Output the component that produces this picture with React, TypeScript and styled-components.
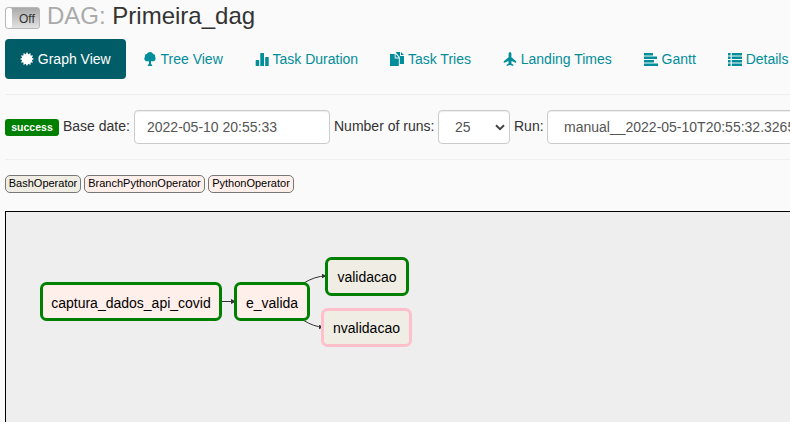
import React from "react";
import styled, { createGlobalStyle, css } from "styled-components";

const GlobalStyle = createGlobalStyle`
  * { box-sizing: border-box; }
  html, body { margin: 0; height: 100%; overflow: hidden; background: #fafafa; }
  body { font-family: "Liberation Sans", Arial, sans-serif; font-size: 14px; line-height: 20px; color: #333; }
`;

const Page = styled.div`
  height: 422px;
  padding-left: 5px;
  overflow: hidden;
  display: flex;
  flex-direction: column;
`;

const Header = styled.header`
  display: flex;
  height: 39px;
  padding-top: 3px;
`;

const Toggle = styled.div`
  width: 35px;
  height: 22px;
  margin: 4px 7px 0 0;
  display: flex;
  border: 1px solid #b8b8b8;
  border-radius: 3px;
  overflow: hidden;
  background: linear-gradient(#aaa, #e2e2e2);
`;

const ToggleKnob = styled.span`
  width: 6px;
  flex: none;
  border-radius: 2px;
  background: #fff;
`;

const ToggleLabel = styled.span`
  flex: 1;
  padding-left: 7px;
  font-size: 12px;
  line-height: 22px;
  color: #333;
`;

const Title = styled.h3`
  margin: 0;
  font-size: 24px;
  line-height: 26px;
  font-weight: 400;
  white-space: pre;
`;

const Muted = styled.span`
  color: #aaa;
`;

const Tabs = styled.nav`
  display: flex;
  gap: 2px;
  height: 40px;
  flex: none;
`;

const Tab = styled.a<{ $active?: boolean }>`
  display: flex;
  flex: none;
  align-items: center;
  gap: 3.8px;
  padding: 0 15px;
  border-radius: 4px;
  white-space: nowrap;
  color: #018d99;
  ${(p) => p.$active && css`background: #005c66; color: #fff;`}
`;

const Glyph = styled.svg`
  width: 14px;
  height: 14px;
  flex: none;
  margin-top: -1px;
  fill: currentColor;
`;

const Divider = styled.hr`
  width: 100%;
  flex: none;
  height: 1px;
  border: 0;
  margin: 15px 0;
  background: #eee;
`;

const Filters = styled.form`
  display: flex;
  flex: none;
  height: 34px;
  width: 900px;
`;

const Status = styled.span`
  width: 54px;
  height: 17px;
  margin: 9px 4px 0 0;
  border-radius: 3px;
  background: green;
  color: #fff;
  font-size: 10.5px;
  font-weight: 700;
  line-height: 17px;
  text-align: center;
`;

const Label = styled.label<{ $width: number }>`
  width: ${(p) => p.$width}px;
  flex: none;
  line-height: 32px;
  white-space: nowrap;
`;

const Field = styled.div<{ $width: number; $indent: number }>`
  width: ${(p) => p.$width}px;
  height: 34px;
  flex: none;
  display: flex;
  align-items: center;
  justify-content: space-between;
  margin-right: 4px;
  padding: 0 4px 0 ${(p) => p.$indent}px;
  border: 1px solid #ccc;
  border-radius: 4px;
  background: #fff;
  box-shadow: inset 0 1px 1px rgba(0, 0, 0, 0.075);
  color: #555;
  white-space: nowrap;
`;

const Chevron = styled.svg`
  width: 10px;
  height: 7px;
  fill: none;
  stroke: #444;
  stroke-width: 2;
`;

const Legend = styled.div`
  display: flex;
  gap: 3px;
  flex: none;
  height: 18px;
  margin-bottom: 18px;
`;

const Operator = styled.span<{ $fill: string; $width: number }>`
  width: ${(p) => p.$width}px;
  border: 1px solid #777;
  border-radius: 5px;
  background: ${(p) => p.$fill};
  color: #000;
  font-size: 11px;
  line-height: 15px;
  text-align: center;
  white-space: nowrap;
`;

const Canvas = styled.main`
  position: relative;
  flex: 1;
  border: 1px solid #000;
  border-right: 0;
  border-bottom: 0;
  background: #eee;
`;

const Edges = styled.svg`
  position: absolute;
  inset: 0;
  width: 784px;
  height: 210px;
  fill: none;
  stroke: #333;
`;

const Node = styled.div<{ $x: number; $y: number; $w: number; $fill: string; $state: string; $drop?: number }>`
  position: absolute;
  left: ${(p) => p.$x}px;
  top: ${(p) => p.$y}px;
  width: ${(p) => p.$w}px;
  height: 39px;
  border: 3px solid ${(p) => p.$state};
  border-radius: 6.5px;
  background: ${(p) => p.$fill};
  color: #000;
  line-height: ${(p) => 35 + 2 * (p.$drop ?? 0)}px;
  text-align: center;
  white-space: nowrap;
`;

const burst = Array.from({ length: 24 }, (_, i) => {
  const a = (i * Math.PI) / 12;
  const r = i % 2 ? 5 : 7;
  return `${(7 + r * Math.sin(a)).toFixed(2)},${(7 - r * Math.cos(a)).toFixed(2)}`;
}).join(" ");

const tabs = [
  { label: "Graph View", icon: <polygon points={burst} /> },
  { label: "Tree View", icon: <path d="M7 0C8.6 0 9.7 .9 10 2.1 11.8 2.3 12.4 3.7 12.1 4.9 13.4 6.6 12.3 9.2 10 9.2H8V11.5L9.5 14H4.5L6 11.5V9.2H4C1.7 9.2 .6 6.6 1.9 4.9 1.6 3.7 2.2 2.3 4 2.1 4.3 .9 5.4 0 7 0Z" /> },
  { label: "Task Duration", icon: <path d="M.7 8.5Q.7 8 1.2 8H3.7Q4.2 8 4.2 8.5V14H.7ZM5.3 1.5Q5.3 1 5.8 1H8.5Q9 1 9 1.5V14H5.3ZM10.2 5.5Q10.2 5 10.7 5H13.2Q13.7 5 13.7 5.5V14H10.2Z" /> },
  { label: "Task Tries", icon: <path d="M0 2H4.7V6.6H8.8V14H0ZM5.6 2L8.8 5.6H5.6ZM6.2 0H10V4H14V12H9.8V5L6.2 1ZM11 0L14 3H11Z" /> },
  { label: "Landing Times", icon: <path d="M7 0C7.8 0 8.4 1 8.4 2V5.2L13.2 9.3V10.9L8.6 8.9 8.3 11.2 10.3 12.8V14L7 13 3.7 14V12.8L5.7 11.2 5.4 8.9.8 10.9V9.3L5.6 5.2V2C5.6 1 6.2 0 7 0Z" /> },
  { label: "Gantt", icon: <path d="M0 1H9V3.6H0ZM0 4.5H13V7H0ZM0 8H10V10.5H0ZM0 11.4H14V14H0Z" /> },
  { label: "Details", icon: <path d="M0 1H2.6V3.4H0ZM3.8 1H14V3.4H3.8ZM0 4.5H2.6V7H0ZM3.8 4.5H14V7H3.8ZM0 8H2.6V10.4H0ZM3.8 8H14V10.4H3.8ZM0 11.5H2.6V14H0ZM3.8 11.5H14V14H3.8Z" /> },
];

const BASH = "#f0ede4";
const PYTHON = "#ffefeb";

export default function App() {
  return (
    <Page>
      <GlobalStyle />
      <Header>
        <Toggle>
          <ToggleKnob />
          <ToggleLabel>Off</ToggleLabel>
        </Toggle>
        <Title>
          <Muted>DAG: </Muted>Primeira_dag
        </Title>
      </Header>
      <Tabs>
        {tabs.map((t, i) => (
          <Tab key={t.label} $active={i === 0}>
            <Glyph viewBox="0 0 14 14">{t.icon}</Glyph>
            {t.label}
          </Tab>
        ))}
      </Tabs>
      <Divider />
      <Filters>
        <Status>success</Status>
        <Label $width={71}>Base date:</Label>
        <Field $width={196} $indent={12}>2022-05-10 20:55:33</Field>
        <Label $width={104}>Number of runs:</Label>
        <Field $width={72} $indent={16}>
          25
          <Chevron viewBox="0 0 10 7"><path d="M1 1.2L5 5.2L9 1.2" /></Chevron>
        </Field>
        <Label $width={33}>Run:</Label>
        <Field $width={300} $indent={16}>manual__2022-05-10T20:55:32.326547+00:00</Field>
      </Filters>
      <Divider />
      <Legend>
        <Operator $fill={BASH} $width={76}>BashOperator</Operator>
        <Operator $fill={PYTHON} $width={121}>BranchPythonOperator</Operator>
        <Operator $fill={PYTHON} $width={86}>PythonOperator</Operator>
      </Legend>
      <Canvas>
        <Edges viewBox="0 0 784 210">
          <defs>
            <marker id="arrow" viewBox="0 0 10 10" refX="9" refY="5" markerWidth="5" markerHeight="5" markerUnits="userSpaceOnUse" orient="0">
              <path d="M0 0L10 5L0 10Z" fill="#333" stroke="none" />
            </marker>
          </defs>
          <path d="M215 89.5H229.5" markerEnd="url(#arrow)" />
          <path d="M297 71.5Q309 64 320 64" markerEnd="url(#arrow)" />
          <path d="M297 108Q308 115 317 115" markerEnd="url(#arrow)" />
        </Edges>
        <Node $x={34} $y={70} $w={182} $fill={PYTHON} $state="green" $drop={1}>captura_dados_api_covid</Node>
        <Node $x={228} $y={70} $w={76} $fill={PYTHON} $state="green" $drop={1}>e_valida</Node>
        <Node $x={319} $y={45} $w={84} $fill={BASH} $state="green">validacao</Node>
        <Node $x={315} $y={96} $w={91} $fill={BASH} $state="pink">nvalidacao</Node>
      </Canvas>
    </Page>
  );
}
